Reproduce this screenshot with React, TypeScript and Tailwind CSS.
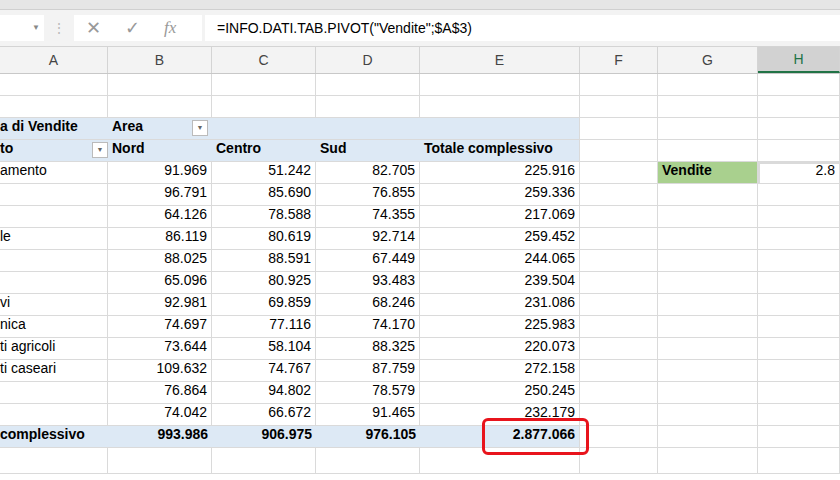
const cols = ["A", "B", "C", "D", "E", "F", "G", "H"];
const grid = "grid grid-cols-[108px_104px_104px_104px_160px_78px_100px_82px]";

const rows: [string, string, string, string, string][] = [
  ["amento", "91.969", "51.242", "82.705", "225.916"],
  ["", "96.791", "85.690", "76.855", "259.336"],
  ["", "64.126", "78.588", "74.355", "217.069"],
  ["le", "86.119", "80.619", "92.714", "259.452"],
  ["", "88.025", "88.591", "67.449", "244.065"],
  ["", "65.096", "80.925", "93.483", "239.504"],
  ["vi", "92.981", "69.859", "68.246", "231.086"],
  ["nica", "74.697", "77.116", "74.170", "225.983"],
  ["ti agricoli", "73.644", "58.104", "88.325", "220.073"],
  ["ti caseari", "109.632", "74.767", "87.759", "272.158"],
  ["", "76.864", "94.802", "78.579", "250.245"],
  ["", "74.042", "66.672", "91.465", "232.179"],
];

function Cell({ children, className = "" }: { children?: React.ReactNode; className?: string }) {
  return (
    <div className={`h-[22px] border-r border-b border-[#dadada] px-1 flex items-end pb-[2px] whitespace-nowrap overflow-hidden ${className}`}>
      {children}
    </div>
  );
}

function Drop() {
  return (
    <span className="mb-[1px] w-[16px] h-[16px] border border-[#bbb] bg-white flex items-center justify-center text-[7px] text-[#666]">▼</span>
  );
}

export default function App() {
  return (
    <div className="w-[840px] h-[480px] bg-white overflow-hidden text-[14px] text-black" style={{ fontFamily: '"Liberation Sans", Arial, sans-serif' }}>
      <div className="h-[10px] bg-[#e6e6e6] border-b border-[#d0d0d0]" />
      <div className="h-[37px] flex items-center bg-[#f3f3f3] border-b border-[#d4d4d4] text-[#888]">
        <div className="w-[44px] h-[26px] bg-white flex items-center justify-end pr-1 text-[8px]">▼</div>
        <div className="w-[30px] flex justify-center text-[#bbb]">⋮</div>
        <div className="w-[128px] h-[26px] bg-white flex items-center gap-6 px-3 text-[18px] text-[#999]">
          <span>✕</span>
          <span>✓</span>
          <span className="italic text-[17px]" style={{ fontFamily: '"Liberation Serif", serif' }}>fx</span>
        </div>
        <div className="ml-[3px] flex-1 h-[26px] bg-white flex items-center px-3 text-[14px] text-black">=INFO.DATI.TAB.PIVOT("Vendite";$A$3)</div>
      </div>
      <div className={`${grid} h-[27px] bg-[#f3f3f3] border-b border-[#c8c8c8] text-[#444]`}>
        {cols.map((c) => (
          <div key={c} className={`flex items-center justify-center border-r border-[#d4d4d4] ${c === "H" ? "bg-[#d2d2d2] border-b-2 border-b-[#217346] text-[#217346]" : ""}`}>{c}</div>
        ))}
      </div>
      <div className={grid}>
        {Array.from({ length: 16 }).map((_, i) => <Cell key={i} />)}
        <Cell className="bg-[#dde9f5] font-bold border-r-0 pl-0">a di Vendite</Cell>
        <Cell className="bg-[#dde9f5] font-bold justify-between border-r-0">Area<Drop /></Cell>
        <Cell className="bg-[#dde9f5] border-r-0" />
        <Cell className="bg-[#dde9f5] border-r-0" />
        <Cell className="bg-[#dde9f5]" />
        <Cell /><Cell /><Cell />
        <Cell className="bg-[#dde9f5] font-bold justify-between border-r-0 pr-0 pl-0">to<Drop /></Cell>
        <Cell className="bg-[#dde9f5] font-bold border-r-0">Nord</Cell>
        <Cell className="bg-[#dde9f5] font-bold border-r-0">Centro</Cell>
        <Cell className="bg-[#dde9f5] font-bold border-r-0">Sud</Cell>
        <Cell className="bg-[#dde9f5] font-bold">Totale complessivo</Cell>
        <Cell /><Cell /><Cell />
        {rows.map((r, i) => (
          <div key={i} className="contents">
            <Cell className="pl-0">{r[0]}</Cell>
            <Cell className="justify-end">{r[1]}</Cell>
            <Cell className="justify-end">{r[2]}</Cell>
            <Cell className="justify-end">{r[3]}</Cell>
            <Cell className="justify-end">{r[4]}</Cell>
            <Cell />
            {i === 0 ? (
              <>
                <Cell className="bg-[#a9d08e] font-bold">Vendite</Cell>
                <Cell className="justify-end border-2 border-[#217346] overflow-visible">2.8</Cell>
              </>
            ) : (
              <><Cell /><Cell /></>
            )}
          </div>
        ))}
        <Cell className="bg-[#dde9f5] font-bold border-r-0 pl-0">complessivo</Cell>
        <Cell className="bg-[#dde9f5] font-bold justify-end border-r-0">993.986</Cell>
        <Cell className="bg-[#dde9f5] font-bold justify-end border-r-0">906.975</Cell>
        <Cell className="bg-[#dde9f5] font-bold justify-end border-r-0">976.105</Cell>
        <Cell className="bg-[#dde9f5] font-bold justify-end relative overflow-visible">
          2.877.066
          <span className="absolute left-[62px] -right-[10px] -top-[8px] -bottom-[8px] border-[3px] border-[#e8141c] rounded-[6px]" />
        </Cell>
        <Cell /><Cell /><Cell />
        {Array.from({ length: 8 }).map((_, i) => <Cell key={"e" + i} className="h-[26px]" />)}
      </div>
    </div>
  );
}
